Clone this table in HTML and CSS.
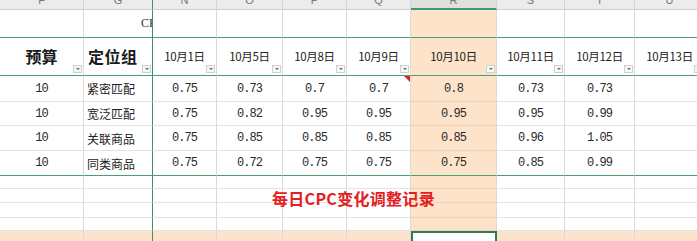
FILE: index.html
```html
<!DOCTYPE html>
<html lang="zh">
<head>
<meta charset="utf-8">
<title>CPC</title>
<link rel="stylesheet" href="styles.css">
</head>
<body>
<div class="sheet">
  <!-- r0 column letters -->
  <div class="ch"><span>F</span></div>
  <div class="ch frz"><span>G</span></div>
  <div class="ch"><span>N</span></div>
  <div class="ch"><span>O</span></div>
  <div class="ch"><span>P</span></div>
  <div class="ch"><span>Q</span></div>
  <div class="ch cur"><span>R</span></div>
  <div class="ch"><span>S</span></div>
  <div class="ch"><span>T</span></div>
  <div class="ch"><span>U</span></div>

  <!-- r1 -->
  <div class="c gb"></div>
  <div class="c gb frz clip"><span class="cp">CPC</span></div>
  <div class="c gb"></div>
  <div class="c gb"></div>
  <div class="c gb"></div>
  <div class="c gb"></div>
  <div class="c hl gb"></div>
  <div class="c gb"></div>
  <div class="c gb"></div>
  <div class="c gb"></div>

  <!-- r2 header -->
  <div class="c gb hd big ctr">预算<i class="flt"></i></div>
  <div class="c gb hd big lft frz">定位组<i class="flt"></i></div>
  <div class="c gb hd dt ctr">10月1日<i class="flt"></i></div>
  <div class="c gb hd dt ctr">10月5日<i class="flt"></i></div>
  <div class="c gb hd dt ctr">10月8日<i class="flt"></i></div>
  <div class="c gb hd dt ctr">10月9日<i class="flt"></i></div>
  <div class="c hl gb hd dt ctr">10月10日<i class="flt"></i></div>
  <div class="c gb hd dt ctr">10月11日<i class="flt"></i></div>
  <div class="c gb hd dt ctr">10月12日<i class="flt"></i></div>
  <div class="c gb hd dt ctr">10月13日<i class="flt"></i></div>

  <!-- r3 -->
  <div class="c num ctr">10</div>
  <div class="c txt lft frz">紧密匹配</div>
  <div class="c num ctr">0.75</div>
  <div class="c num ctr">0.73</div>
  <div class="c num ctr">0.7</div>
  <div class="c num ctr note">0.7</div>
  <div class="c hl num ctr">0.8</div>
  <div class="c num ctr">0.73</div>
  <div class="c num ctr">0.73</div>
  <div class="c"></div>

  <!-- r4 -->
  <div class="c num ctr">10</div>
  <div class="c txt lft frz">宽泛匹配</div>
  <div class="c num ctr">0.75</div>
  <div class="c num ctr">0.82</div>
  <div class="c num ctr">0.95</div>
  <div class="c num ctr">0.95</div>
  <div class="c hl num ctr">0.95</div>
  <div class="c num ctr">0.95</div>
  <div class="c num ctr">0.99</div>
  <div class="c"></div>

  <!-- r5 -->
  <div class="c num ctr">10</div>
  <div class="c txt lft frz">关联商品</div>
  <div class="c num ctr">0.75</div>
  <div class="c num ctr">0.85</div>
  <div class="c num ctr">0.85</div>
  <div class="c num ctr">0.85</div>
  <div class="c hl num ctr">0.85</div>
  <div class="c num ctr">0.96</div>
  <div class="c num ctr">1.05</div>
  <div class="c"></div>

  <!-- r6 -->
  <div class="c gb num ctr">10</div>
  <div class="c gb txt lft frz">同类商品</div>
  <div class="c gb num ctr">0.75</div>
  <div class="c gb num ctr">0.72</div>
  <div class="c gb num ctr">0.75</div>
  <div class="c gb num ctr">0.75</div>
  <div class="c hl gb num ctr">0.75</div>
  <div class="c gb num ctr">0.85</div>
  <div class="c gb num ctr">0.99</div>
  <div class="c gb"></div>

  <!-- r7 -->
  <div class="c"></div><div class="c frz"></div><div class="c"></div><div class="c"></div><div class="c"></div>
  <div class="c"></div><div class="c hl"></div><div class="c"></div><div class="c"></div><div class="c"></div>

  <!-- r8 -->
  <div class="c"></div><div class="c frz"></div><div class="c"></div>
  <div class="c over"><span class="title">每日CPC变化调整记录</span></div>
  <div class="c"></div>
  <div class="c"></div><div class="c hl"></div><div class="c"></div><div class="c"></div><div class="c"></div>

  <!-- r9 -->
  <div class="c"></div><div class="c frz"></div><div class="c"></div><div class="c"></div><div class="c"></div>
  <div class="c"></div><div class="c hl"></div><div class="c"></div><div class="c"></div><div class="c"></div>

  <!-- r10 -->
  <div class="c"></div><div class="c frz"></div><div class="c"></div><div class="c"></div><div class="c"></div>
  <div class="c"></div><div class="c hl"></div><div class="c"></div><div class="c"></div><div class="c"></div>

  <!-- r11 selected row -->
  <div class="c sel"></div><div class="c sel frz"></div><div class="c sel"></div><div class="c sel"></div><div class="c sel"></div>
  <div class="c sel"></div><div class="c active"></div><div class="c sel"></div><div class="c sel"></div><div class="c sel"></div>
</div>
</body>
</html>
```

FILE: styles.css
```css
html, body {
  margin: 0;
  padding: 0;
  background: #ffffff;
  overflow: hidden;
}

body {
  width: 697px;
  height: 241px;
  font-family: "Noto Sans CJK SC", "Noto Sans", sans-serif;
  color: #222;
}

.sheet {
  display: grid;
  grid-template-columns: 84px 69px 64px 66px 64px 64px 86px 68px 70px 70px;
  grid-template-rows: 10px 28px 38px 26px 24px 25px 25px 13px 14px 15px 13px 20px;
  width: 705px;
}

.sheet > div {
  box-sizing: border-box;
  min-width: 0;
}

/* column letter header */
.ch {
  background: #ececec;
  border-right: 1px solid #d6d6d6;
  border-bottom: 1px solid #cfcfcf;
  overflow: hidden;
  text-align: center;
  font-family: "Liberation Sans", sans-serif;
  font-size: 11px;
  color: #777;
}
.ch span {
  display: block;
  line-height: 11px;
  margin-top: -5px;
}
.ch.cur {
  background: #e0e0e0;
  border-bottom: 2px solid #3f9a6c;
}

/* regular cell */
.c {
  position: relative;
  border-right: 1px solid #dadada;
  border-bottom: 1px solid #e3e3e3;
  display: flex;
  align-items: center;
  white-space: nowrap;
}

.hl {
  background: #fde3ca;
  border-bottom-color: #f0d2b4;
}

.gb {
  border-bottom-color: #4c9d74;
}

.frz {
  border-right-color: #3f9068;
}

.sel {
  background: #fde3ca;
}

.active {
  background: #ffffff;
  border: 2px solid #2f7d55;
  border-bottom: none;
}

.ctr { justify-content: center; }
.lft { justify-content: flex-start; padding-left: 3px; }

.clip { overflow: hidden; }
.cp {
  font-family: "Liberation Serif", serif;
  font-size: 12px;
  color: #333;
  padding-left: 57px;
}

.hd { padding-bottom: 1px; }

.big {
  font-size: 16px;
  font-weight: bold;
  color: #1a1a1a;
}
.big.lft { padding-left: 4px; letter-spacing: 0.5px; }

.dt {
  font-size: 11.5px;
  color: #222;
  letter-spacing: -0.3px;
}

.txt {
  font-size: 12px;
  color: #222;
}

.num {
  font-family: "Liberation Mono", monospace;
  font-size: 12px;
  letter-spacing: -0.9px;
  color: #2a2a2a;
}

/* filter dropdown button */
.flt {
  position: absolute;
  right: 1px;
  bottom: 2px;
  width: 9px;
  height: 8px;
  box-sizing: border-box;
  background: #f7f7f7;
  border: 1px solid #cfcfcf;
}
.flt::after {
  content: "";
  position: absolute;
  left: 2px;
  top: 2px;
  border-left: 2px solid transparent;
  border-right: 2px solid transparent;
  border-top: 2px solid #2e8c5c;
}

/* comment indicator */
.note::after {
  content: "";
  position: absolute;
  right: 0;
  top: 0;
  border-top: 6px solid #d8262c;
  border-left: 6px solid transparent;
}

/* overflowing title text */
.over { overflow: visible; }
.title {
  position: relative;
  z-index: 2;
  padding-left: 55px;
  margin-top: 5px;
  font-size: 16px;
  font-weight: bold;
  color: #e3201f;
  letter-spacing: 0.3px;
}
```
